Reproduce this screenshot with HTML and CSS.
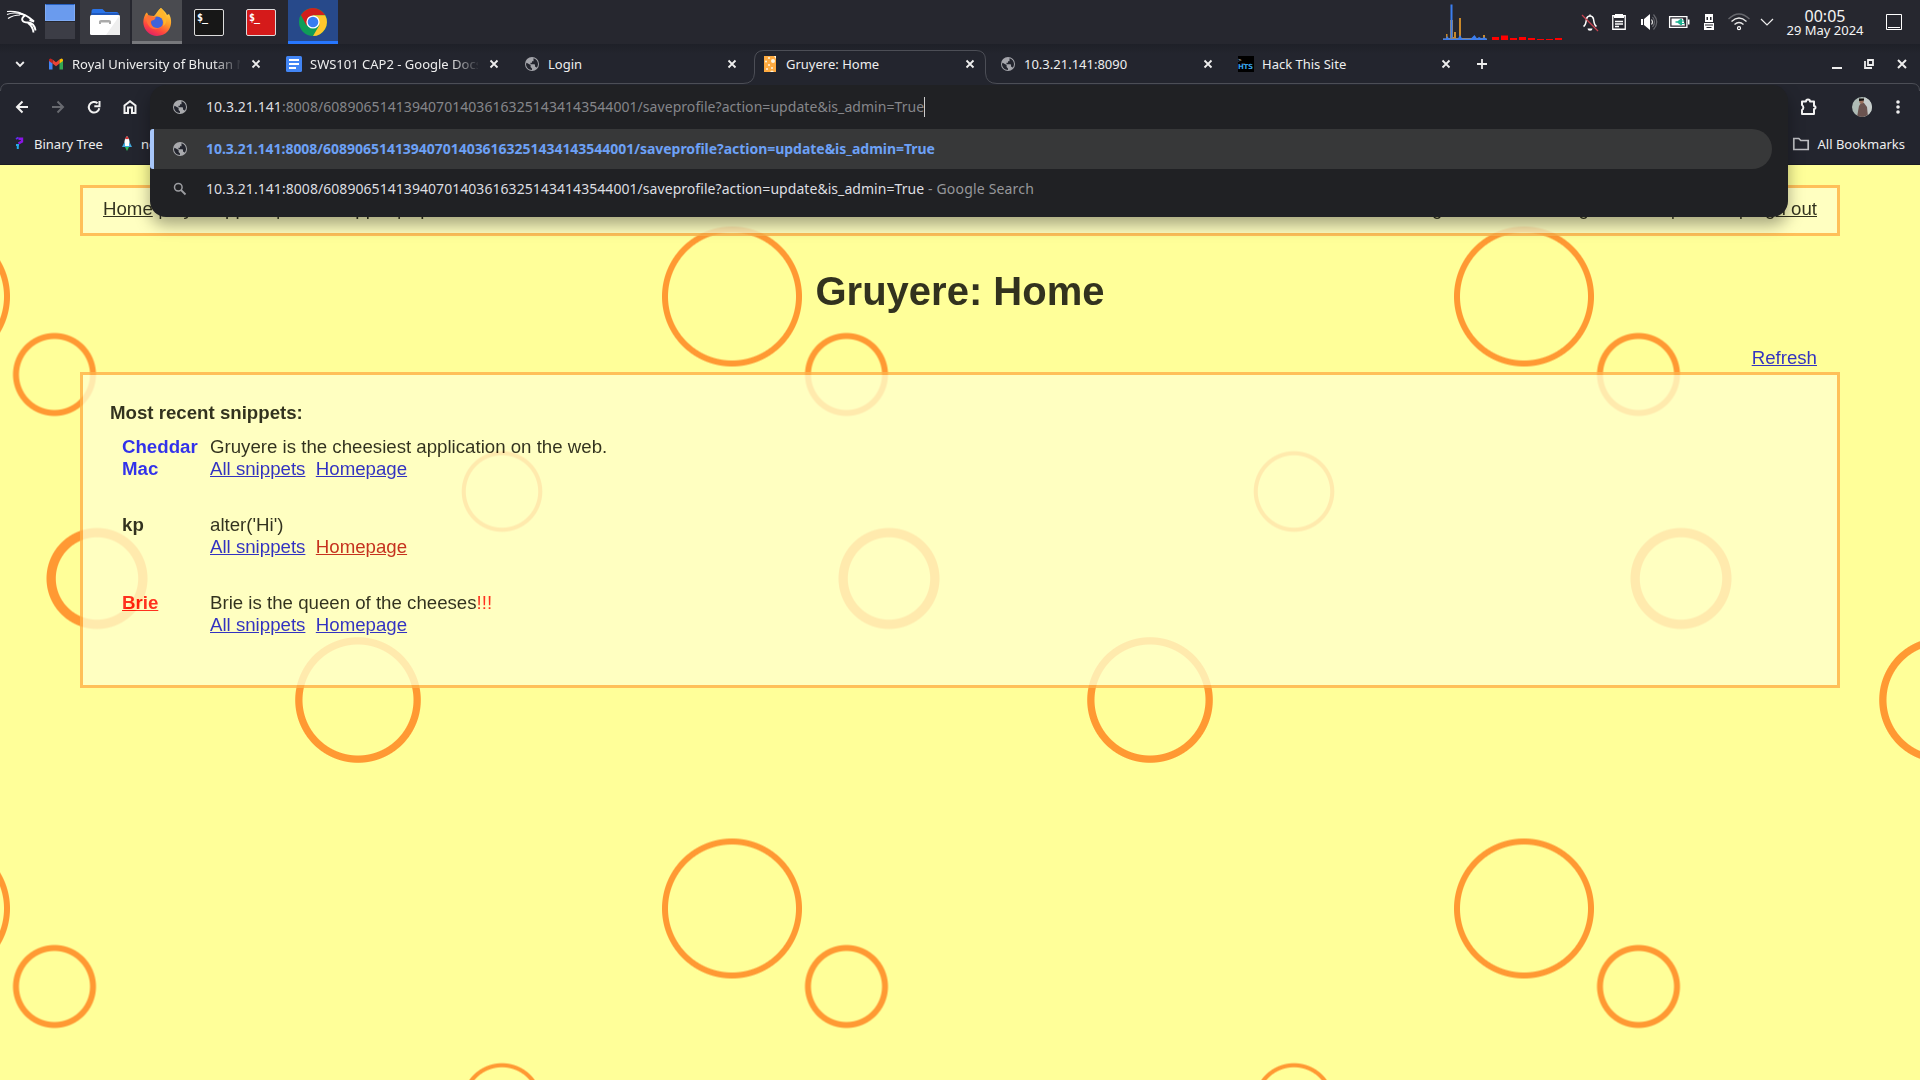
FILE: index.html
```html
<!DOCTYPE html>
<html lang="en">
<head>
<meta charset="utf-8">
<title>Gruyere: Home</title>
<link rel="stylesheet" href="styles.css">
</head>
<body>
<svg class="defs" width="0" height="0">
  <symbol id="globe" viewBox="0 0 16 16"><circle cx="8" cy="8" r="7" fill="currentColor"/><path class="cut" d="M2.6 6.8 L6.6 9 V11 L8 12.6 V14 C4.5 14 2 11.200 2 8 Z M9.500 2.300 C12 2.900 14 5.200 14 8 C14 9.500 13.500 10.800 12.700 11.800 C12.300 11 11.800 10.800 11 10.800 V9.200 C11 8.600 10.600 8.200 10 8.200 H6.500 V6.800 H8 V5.300 H9.500 Z"/></symbol>
  <symbol id="close" viewBox="0 0 10 10"><path d="M1.500 1.500 L8.500 8.500 M8.500 1.500 L1.500 8.500" stroke="currentColor" stroke-width="1.800" fill="none"/></symbol>
</svg>

<header class="panel">
  <svg class="kali" width="45" height="44" viewBox="0 0 45 44" fill="none" stroke="#fff"><path d="M7 11.500 C14 11 20 11.500 25 15.500 M7 14.500 C12 12.500 17 12.500 22 14.500 M8 18.500 C11 16.500 15 15 20 15" stroke-width="1.200"/><path d="M20 13.500 L25 15 L29 17.500 M29 17.500 L34 21.500 L29.500 20 M25 15.500 C20 19 22 22.500 28 22.500 C33 23 35 27 35.500 30.500 M28 23 C31 25 33 28 33.500 32.500" stroke-width="1.900"/></svg>
  <div class="pager"><i class="on"></i><i></i></div>
  <div class="launch files"><svg width="50" height="44" viewBox="80 0 50 44"><path d="M91.500 11 q0-2 2-2 h9 l3 3 h11 q2 0 2 2 v4 h-27z" fill="#2b74e8"/><path d="M91.500 13 h27 v2 h-27z" fill="#2159bd"/><rect x="90" y="15" width="30" height="20" rx="1.500" fill="#fff"/><path d="M120 15 V35 H106z" fill="#eee"/><path d="M99 24 V21.500 Q99 20 101 20 H109 Q111 20 111 21.500 V24 H109 V22.500 H101 V24z" fill="#aaa"/></svg></div>
  <div class="launch firefox"><svg width="50" height="44" viewBox="132 0 50 44"><defs><linearGradient id="fox" x1=".8" y1="0" x2=".3" y2="1"><stop offset="0" stop-color="#ffdf4a"/><stop offset=".45" stop-color="#ff9a25"/><stop offset=".75" stop-color="#ff463e"/><stop offset="1" stop-color="#df2068"/></linearGradient></defs><path d="M161 8 C163 10 166 12 167 15 L169 14 C172 19 172 26 168 31 C163 37 153 37.500 148 32.500 C143 28 142 21 145 15 C145.500 13.500 146.500 12.500 147 12.500 L148.500 15.500 L154 16 C156 14 158 10 161 8z" fill="url(#fox)"/><circle cx="157" cy="22.500" r="6" fill="#3f63da"/><path d="M147 15 L156 17.500 L154 20 L150 21 C151 28 159 31 164 24 C161 30 153 31 149 26 C146 22 146 18 147 15z" fill="#ff7139"/><path d="M157 15 C163 16 165 21 163 26 C168 23 168 16 161 8 C158 10 159 12 157 15z" fill="#ffb52c"/></svg></div>
  <div class="launch"><span class="term">$_</span></div>
  <div class="launch"><span class="term red">$_</span></div>
  <div class="launch chrome"><svg width="50" height="44" viewBox="288 0 50 44"><circle cx="313" cy="22" r="14" fill="#0f9d58"/><path d="M300.900 15 A14 14 0 0 1 325.100 15 L313 15 L306.500 25.500z" fill="#d21f1b"/><path d="M313 15.200 H325.200 A14 14 0 0 1 313 36 L319.500 25z" fill="#ffc72c"/><circle cx="313" cy="22" r="6.600" fill="#fff"/><circle cx="313" cy="22" r="5.300" fill="#377df0"/></svg></div>

  <div class="tray">
    <svg width="50" height="44" viewBox="1440 0 50 44"><path d="M1443 40 V38.500 H1446 V34 H1447.500 V38 H1450 V20 H1453 V37 H1454 V32 H1456 V38 H1459 V18 H1461 V38 H1483 V35 H1485 V38.500 H1487 V40z" fill="#c98829"/><path d="M1450.500 38 V4.500 H1452.500 V38z M1443 40 V38.500 H1446 L1447 36 L1449 38.500 H1458 L1460 35 L1462 38.500 H1471 L1474.500 35 L1477 38.500 L1479 37 L1482 38.500 L1484 37 L1487 39 V40z" fill="#3b7ef0"/></svg>
    <svg width="85" height="44" viewBox="1490 0 85 44" fill="#f00"><path d="M1492 37h7v3h-7z M1501 35.500h7v4.500h-7z M1510 38h7v2h-7z M1519 37h7v3h-7z M1528 38h7v2h-7z M1537 39h7v1h-7z M1546 39h7v1h-7z M1555 38h7v2h-7z"/></svg>
    <svg width="30" height="44" viewBox="1575 0 30 44" fill="none" stroke="#fff"><path d="M1583.500 26.500 C1586 25 1586 22 1586.500 19 C1587 16.500 1588.500 16 1590 16 C1591.500 16 1593 16.500 1593.500 19 C1594 22 1594 25 1596.500 26.500 M1590 14.500 V16" stroke-width="1.500"/><path d="M1587.500 28.500 h5 a2.500 2.300 0 0 1 -5 0z" fill="#fff" stroke="none"/><path d="M1582 15 L1598 31" stroke="#c6424f" stroke-width="1.300"/></svg>
    <svg width="30" height="44" viewBox="1605 0 30 44"><path d="M1612.750 15.750 h12.500 v13.500 h-12.500z M1615 21.500 h8 M1615 24 h8 M1615 26.500 h4" fill="none" stroke="#fff" stroke-width="1.300"/><path d="M1614 15 h1 v-1 h8 v1 h1 v3 h-10z" fill="#fff"/></svg>
    <svg width="30" height="44" viewBox="1635 0 30 44" fill="none"><path d="M1641 19 h2 v6 h-2z M1644 19 l6-5 v16 l-6-5z" fill="#fff"/><path d="M1651.500 19.500 q2 2.500 0 5" stroke="#ddd" stroke-width="1.200"/><path d="M1652.500 17 q4 5 0 10 M1653.500 14.500 q6.500 7.500 0 15" stroke="#66676d" stroke-width="1.200"/></svg>
    <svg width="30" height="44" viewBox="1665 0 30 44"><path d="M1669.600 16.600 h17.300 v10.800 h-17.300z" fill="none" stroke="#fff" stroke-width="1.300"/><path d="M1688 19.500h1.500v5h-1.500z M1671.500 18.500h11.500l2 7h-13.500z" fill="#fff"/><path d="M1675.500 21.200 h2 l3-2.200 h1.500 v1.500 h2.500 v1 h-2.500 v1.500 h2.500 v1 h-2.500 v1 h-1.500 l-3-2.200 h-2z" fill="#1fb492"/></svg>
    <svg width="30" height="44" viewBox="1695 0 30 44"><path d="M1705 14 h8 v8 h-8z M1704 23 h10 v7 h-10z" fill="#fff"/><path d="M1706.500 17 h1.500 v3 h-1.500z M1710 17 h1.500 v3 h-1.500z M1705 24.500 h8 v1 h-8z M1706.500 27 h5 v1 h-5z" fill="#26272f"/></svg>
    <svg width="30" height="44" viewBox="1725 0 30 44" fill="none"><path d="M1728.500 19 Q1739 9 1749.500 19" stroke="#66676d" stroke-width="1.400"/><path d="M1731.500 21.500 Q1739 14.500 1746.500 21.500 M1734.500 24.500 Q1739 20.500 1743.500 24.500" stroke="#e8e8e8" stroke-width="1.400"/><circle cx="1739" cy="28.200" r="1.500" stroke="#fff" stroke-width="1.200"/></svg>
    <svg width="24" height="44" viewBox="1755 0 24 44"><path d="M1761 19 L1767 25 L1773 19" fill="none" stroke="#eee" stroke-width="1.200"/></svg>
    <div class="clock"><span class="time">00:05</span><span class="date">29 May 2024</span></div>
    <svg width="49" height="44" viewBox="1871 0 49 44"><path d="M1886.500 14.500 h15 v15 h-15z M1888 27.500 h12" fill="none" stroke="#fff"/></svg>
  </div>
</header>

<div class="browser">
  <div class="tabs">
    <div class="tab-menu"><svg width="10" height="8" viewBox="0 0 10 8"><path d="M1.200 2 L5 5.800 L8.800 2" fill="none" stroke="#eee" stroke-width="1.900"/></svg></div>
    <div class="tab"><svg class="fav" viewBox="0 0 16 16"><path d="M1 13.500 V4 L4.500 6.500 V13.500z" fill="#4285f4"/><path d="M11.500 13.500 V6.500 L15 4 V13.500z" fill="#34a853"/><path d="M4.500 3.500 L8 6.200 L11.500 3.500 V7.500 L8 10.200 L4.500 7.500z" fill="#ea4335"/><path d="M1 4 Q1 2.500 2.500 2.500 L4.500 3.500 V7.500 L1 5z" fill="#c5221f"/><path d="M11.500 3.500 L13.500 2.500 Q15 2.500 15 4 V5 L11.500 7.500z" fill="#fbbc04"/></svg><span class="title fade">Royal University of Bhutan Mail</span><svg class="x"><use href="#close"/></svg></div>
    <div class="tab"><svg class="fav" viewBox="0 0 16 16"><rect width="16" height="16" rx="1.500" fill="#4285f4"/><path d="M3 4 h10 M3 8 h10 M3 12 h7" stroke="#fff" stroke-width="1.800"/></svg><span class="title fade">SWS101 CAP2 - Google Docs</span><svg class="x"><use href="#close"/></svg></div>
    <div class="tab"><svg class="fav gl"><use href="#globe"/></svg><span class="title">Login</span><svg class="x"><use href="#close"/></svg></div>
    <div class="tab"><svg class="fav" viewBox="0 0 16 16"><path d="M2 0h12v16h-12z" fill="#ffab40"/><g fill="#fff5df"><circle cx="11" cy="5" r="2"/><circle cx="4" cy="5.500" r="1"/><circle cx="7" cy="2" r="1"/><circle cx="7" cy="9" r="1"/><circle cx="10" cy="12" r="1"/><circle cx="5" cy="13" r="1"/><path d="M8 16 q2-3 4 0z M12 0h2v3z"/></g></svg><span class="title">Gruyere: Home</span><svg class="x"><use href="#close"/></svg></div>
    <div class="tab"><svg class="fav gl"><use href="#globe"/></svg><span class="title">10.3.21.141:8090</span><svg class="x"><use href="#close"/></svg></div>
    <div class="tab"><span class="fav hts"><b>&gt;_</b><em>HTS</em></span><span class="title">Hack This Site</span><svg class="x"><use href="#close"/></svg></div>
    <svg class="plus" width="28" height="40" viewBox="1468 44 28 40"><path d="M1477 64 h10 M1482 59 v10" stroke="#eee" stroke-width="1.800"/></svg>
    <svg class="winctl" width="100" height="40" viewBox="1820 44 100 40" fill="none" stroke="#eee" stroke-width="2"><path d="M1832 68 h10"/><path d="M1868 60 h5 v5 h-5z M1865 61 v7 h7" stroke-width="1.800"/><path d="M1898 60 l8 8 M1906 60 l-8 8"/></svg>
    <svg class="outline" width="1920" height="42" viewBox="0 50 1920 42"><path d="M0.500 91 Q0.500 83.500 8 83.500 H743 Q754 83.500 754.500 73 V60 Q754.500 50.500 764 50.500 H976 Q985.500 50.500 985.500 60 V73 Q986 83.500 997 83.500 H1912 Q1919.500 83.500 1919.500 91" fill="none" stroke="#4c4e56"/></svg>
  </div>

  <div class="toolbar">
    <svg width="150" height="46" viewBox="0 84 150 46" fill="none" stroke="#f2f2f2" stroke-width="2"><path d="M28 107 H17 M22.500 101.500 L17 107 L22.500 112.500"/><path d="M52 107 H63 M57.500 101.500 L63 107 L57.500 112.500" stroke="#686a70"/><path d="M97.500 103.200 A5.300 5.300 0 1 0 99.300 108.300"/><path d="M99.500 101 v5.200 h-5.200"/><path d="M124.500 105.500 L130 101.200 L135.500 105.500 V113 H132 V107.500 H128 V113 H124.500z"/></svg>
    <svg class="tools" width="132" height="46" viewBox="1788 84 132 46"><path d="M1802 101.500 h4 a2 2 0 0 1 4 0 h4 v4.500 a1.500 1.500 0 0 1 0 3 v5 h-12 v-4 a3 3 0 0 0 0-5z" fill="none" stroke="#f2f2f2" stroke-width="2" stroke-linejoin="round"/><clipPath id="av"><circle cx="1862" cy="107" r="10"/></clipPath><g clip-path="url(#av)"><path d="M1852 97h20v20h-20z" fill="#aebbb5"/><path d="M1864 97h8v20h-8z" fill="#c7cdcb"/><path d="M1857 117 l2-11 2-3 h3 l3 4 1 10z" fill="#6b5450"/><circle cx="1861.500" cy="101.500" r="2.200" fill="#9a6f5c"/><path d="M1859 101 v-2.500 h5 v2z" fill="#15100e"/></g><g fill="#eee"><circle cx="1898" cy="102" r="1.800"/><circle cx="1898" cy="107" r="1.800"/><circle cx="1898" cy="112" r="1.800"/></g></svg>
  </div>

  <div class="bookmarks">
    <svg width="16" height="18" viewBox="0 0 16 18"><path d="M4 4 L6.500 2.500" stroke="#5b30f0" stroke-width="2" fill="none"/><path d="M6.500 3.800 H10 V6.500 L6.500 8.500" stroke="#8a14e6" stroke-width="2.400" fill="none"/><path d="M4 10 H7 M5.800 10 V14" stroke="#24a8e8" stroke-width="2" fill="none"/></svg><span class="bm">Binary Tree</span>
    <svg class="rocket" width="12" height="18" viewBox="0 0 12 18"><path d="M6 1 Q9 4 8.500 9 H3.500 Q3 4 6 1z" fill="#e8eef2"/><path d="M6 1 L8 4 H4z" fill="#d93030"/><path d="M3 8 L1 12 H11 L9 8z" fill="#41a8dc"/><path d="M4 5 h4 v6 h-4z" fill="#fff"/><path d="M4 12 h4 l-2 4z" fill="#2fc05c"/></svg><span class="bm">notes</span>
    <div class="allbm"><svg width="18" height="14" viewBox="0 0 18 14"><path d="M1.800 1.500 h5 l2 2 h7.400 v9 h-14.400z" fill="none" stroke="#bfc0c4" stroke-width="1.700"/></svg><span>All Bookmarks</span></div>
  </div>

  <div class="omnibox">
    <div class="row input"><svg class="ic"><use href="#globe"/></svg><span class="url"><b>10.3.21.141</b>:8008/608906514139407014036163251434143544001/saveprofile?action=update&amp;is_admin=True</span><i class="caret"></i></div>
    <div class="row sel"><svg class="ic"><use href="#globe"/></svg><span>10.3.21.141:8008/608906514139407014036163251434143544001/saveprofile?action=update&amp;is_admin=True</span></div>
    <div class="row"><svg class="ic" viewBox="0 0 16 16"><circle cx="6.300" cy="6.300" r="3.800" fill="none" stroke="#9c9da1" stroke-width="1.500"/><path d="M9 9 L13.500 13.500" stroke="#9c9da1" stroke-width="1.800"/></svg><span>10.3.21.141:8008/608906514139407014036163251434143544001/saveprofile?action=update&amp;is_admin=True</span><span class="desc">&nbsp;- Google Search</span></div>
  </div>
</div>

<main class="page">
  <div class="content">
    <nav class="menu">
      <span><a href="#">Home</a> | <a href="#">My Snippets</a> | <a href="#">New Snippet</a> | <a href="#">Upload</a></span>
      <span class="user">Tshering Karma &lt;Tshering Karma&gt;&nbsp; | <a href="#">Profile</a> | <a href="#">Sign out</a></span>
    </nav>
    <h1>Gruyere: Home</h1>
    <div class="refresh"><a href="#">Refresh</a></div>
    <section class="box">
      <h2>Most recent snippets:</h2>
      <div class="snip"><b class="blue">Cheddar Mac</b><div>Gruyere is the cheesiest application on the web.<br><a href="#">All snippets</a><a href="#">Homepage</a></div></div>
      <div class="snip"><b>kp</b><div>alter('Hi')<br><a href="#">All snippets</a><a class="visited" href="#">Homepage</a></div></div>
      <div class="snip"><b class="brie">Brie</b><div>Brie is the queen of the cheeses<span class="bang">!!!</span><br><a href="#">All snippets</a><a href="#">Homepage</a></div></div>
    </section>
  </div>
</main>
</body>
</html>
```

FILE: styles.css
```css
* { box-sizing: border-box; }
body {
  margin: 0;
  width: 1920px;
  height: 1080px;
  overflow: hidden;
  display: flex;
  flex-direction: column;
  font-family: "Noto Sans", sans-serif;
  color: #eee;
}
svg { display: block; flex: none; }
.defs { position: absolute; }
.cut { fill: #23252e; }

/* desktop panel */
.panel {
  height: 44px;
  flex: none;
  display: flex;
  background: #26272f;
}
.pager { width: 30px; padding-top: 4px; margin-right: 5px; display: flex; flex-direction: column; gap: 1px; }
.pager i { height: 17px; background: #3c3d46; }
.pager .on { background: #6a9bee; border: 1px solid #7fabf5; border-top-color: #2760c0; }
.launch { width: 50px; height: 44px; margin-right: 2px; display: flex; align-items: center; justify-content: center; }
.files { background: #383940; }
.firefox { background: #4a4b50; border-bottom: 3px solid #77787c; }
.firefox svg, .chrome svg { align-self: flex-start; }
.chrome { background: #27498a; border-bottom: 3px solid #2777ff; }
.term {
  width: 30px;
  height: 27px;
  border: 1.500px solid #ddd;
  border-radius: 2px;
  background: #171717;
  font: bold 10px/11px "DejaVu Sans Mono", monospace;
  padding: 2px 2px;
  color: #fff;
  letter-spacing: -1px;
}
.term.red { background: #d51a1a; }
.tray { margin-left: auto; display: flex; }
.clock {
  width: 92px;
  display: flex;
  flex-direction: column;
  align-items: center;
  padding-top: 8px;
  color: #f4f4f4;
}
.time { font-size: 16px; line-height: 16px; }
.date { font-size: 13px; line-height: 13px; white-space: nowrap; }

/* browser window */
.browser {
  position: relative;
  z-index: 2;
  height: 121px;
  flex: none;
  background: linear-gradient(#1e2028, #23252e 10px);
  border-bottom: 1px solid #1b1c23;
}
.tabs { position: relative; height: 40px; display: flex; }
.outline { position: absolute; left: 0; top: 6px; }
.tab-menu { width: 40px; padding: 16px 15px; }
.tab {
  width: 238px;
  display: flex;
  align-items: center;
  padding-left: 8px;
}
.fav { width: 16px; height: 16px; margin-right: 8px; flex: none; }
.gl { color: #a4a5ab; }
.hts { background: #000; display: flex; flex-direction: column; line-height: 6px; padding-top: 1px; }
.hts b { font: 6px/6px "DejaVu Sans Mono", monospace; color: #ccc; }
.hts em { font: bold 7px/9px "DejaVu Sans", sans-serif; color: #34a0e8; letter-spacing: -0.300px; }
.title {
  width: 179px;
  font-size: 13px;
  line-height: 20px;
  height: 20px;
  white-space: nowrap;
  overflow: hidden;
}
.fade {
  width: 168px;
  margin-right: 11px;
  mask-image: linear-gradient(to right, #000 140px, transparent 170px);
}
.x { width: 10px; height: 10px; }
.winctl { margin-left: auto; }
.toolbar { height: 46px; display: flex; }
.tools { margin-left: auto; }
.bookmarks { height: 34px; display: flex; align-items: center; padding: 0 15px 6px 12px; font-size: 13px; }
.bookmarks .bm { margin-left: 6px; }
.rocket { margin: 0 2px 0 18px; }
.allbm { margin-left: auto; display: flex; align-items: center; gap: 7px; }

/* address bar with suggestions, floating above the page */
.omnibox {
  position: absolute;
  left: 150px;
  top: 41px;
  width: 1638px;
  height: 132px;
  border-radius: 16px;
  background: #202124;
  box-shadow: 0 8px 16px rgba(0, 0, 0, 0.350);
  font-size: 14px;
  letter-spacing: 0.053px;
  color: #dddee1;
  clip-path: inset(0 -40px -60px -40px);
}
.omnibox .cut { fill: #202124; }
.row { height: 40px; display: flex; align-items: center; padding-left: 22px; white-space: nowrap; }
.row span { padding-bottom: 2px; }
.input { height: 44px; color: #85868a; }
.input b { font-weight: 400; color: #dddee1; }
.caret { width: 1px; height: 20px; background: #ccc; }
.ic { width: 16px; height: 16px; margin-right: 18px; color: #a9aaad; }
.sel {
  width: 1622px;
  background: #373839;
  border-left: 4px solid #a8c7fa;
  border-radius: 3px 20px 20px 3px;
  padding-left: 18px;
  color: #6da1f6;
  font-weight: 700;
  letter-spacing: -0.032px;
}
.desc { color: #96979a; letter-spacing: 0.180px; }

/* cheese page */
.page {
  flex: 1;
  padding: 20px 80px;
  font: 18.660px/22px "Liberation Sans", Arial, sans-serif;
  color: #000;
  background-color: #ff9;
  background-image:
    radial-gradient(circle, transparent 63.500px, #f93 64.500px, #f93 69.500px, transparent 70.500px),
    radial-gradient(circle, transparent 35px, #f93 36px, #f93 41px, transparent 42px),
    radial-gradient(circle, transparent 40.700px, #f93 41.700px, #f93 50px, transparent 51px),
    radial-gradient(circle, transparent 55px, #f93 56px, #f93 62.300px, transparent 63.300px),
    radial-gradient(circle, transparent 35.700px, #f93 36.700px, #f93 39.800px, transparent 40.800px);
  background-size: 792px 612px;
  background-position: 336px -174.500px, 450.500px -96.500px, 493px 107.500px, 754px 229px, 106px 20.500px;
}
.content { opacity: 0.800; }
.content a { color: #00c; text-decoration: underline; }
.content .menu a { color: #000; }
.menu {
  height: 51px;
  border: 3px solid #ffb14a;
  background: #ffc;
  padding: 10px 20px;
  display: flex;
  justify-content: space-between;
  white-space: nowrap;
}
h1 { margin: 32px 0 0; font-size: 40px; line-height: 46px; text-align: center; }
.refresh { height: 58px; padding: 33px 20px 0 0; padding-right: 23px; text-align: right; }
.box {
  height: 316px;
  border: 3px solid #ffb14a;
  background: #ffc;
  padding: 27px;
}
h2 { margin: 0 0 12px; font-size: inherit; line-height: 22px; }
.snip { height: 78px; display: grid; grid-template-columns: 78px 1fr; column-gap: 10px; padding-left: 12px; }
.snip a + a { margin-left: 10.400px; }
.blue { color: #00f; }
.content a.visited { color: #b80000; }
.brie { color: #f00; text-decoration: underline; }
.bang { color: #f00; }
```
